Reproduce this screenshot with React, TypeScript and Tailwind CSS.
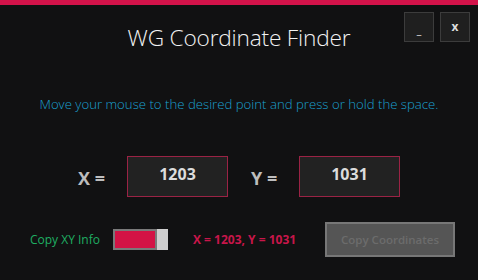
import React, { useState } from 'react';

export default function App() {
  const [copyXY, setCopyXY] = useState(true);
  const x = 1203;
  const y = 1031;

  return (
    <div className="w-[478px] h-[280px] bg-[#111112] flex flex-col overflow-hidden" style={{ fontFamily: '"Open Sans", "Noto Sans", sans-serif' }}>
      <div className="h-[5px] bg-[#d3134a]" />

      {/* header */}
      <div className="grid grid-cols-[1fr_auto_1fr] items-start">
        <div />
        <h1 className="mt-[17px] text-[22.7px] font-light text-[#f2f2f2] tracking-[-0.2px] leading-[32px]">WG Coordinate Finder</h1>
        <div className="flex justify-end gap-[6px] pt-[7px] pr-[8px]">
          <button className="w-[30px] h-[30px] bg-[#1f1f1f] border border-[#3c3c3c] text-[#ddd] text-[11px] font-bold leading-none flex items-center justify-center pt-[4px]">_</button>
          <button className="w-[30px] h-[30px] bg-[#1f1f1f] border border-[#3c3c3c] text-[#ddd] text-[12px] font-bold leading-none flex items-center justify-center">x</button>
        </div>
      </div>

      <p className="mt-[40px] text-center text-[13.2px] font-light text-[#1ba0cf] leading-[20px]">
        Move your mouse to the desired point and press or hold the space.
      </p>

      {/* coordinate boxes */}
      <div className="mt-[42px] flex items-center pl-[78px]">
        <span className="w-[49px] text-[18px] font-bold text-[#bdbdbd] mt-[4px]">X =</span>
        <div className="w-[101px] h-[41px] bg-[#222222] border border-[#9b2345] flex items-start justify-center pt-[5px] text-[16px] font-bold text-[#dcdcdc]">{x}</div>
        <span className="ml-[23px] w-[48px] text-[18px] font-bold text-[#bdbdbd] mt-[4px]">Y =</span>
        <div className="w-[101px] h-[41px] bg-[#222222] border border-[#9b2345] flex items-start justify-center pt-[5px] text-[16px] font-bold text-[#dcdcdc]">{y}</div>
      </div>

      {/* bottom row */}
      <div className="mt-[25px] flex items-center pl-[30px]">
        <span className="text-[12px] text-[#1fae62] w-[83px]">Copy XY Info</span>
        <button onClick={() => setCopyXY(!copyXY)} className="flex h-[21px] w-[55px]">
          <span className="flex-1 border-2 border-[#7a7a7a] bg-[#d31345]" />
          <span className="w-[11px] bg-[#cfcfcf]" />
        </button>
        <span className="ml-[25px] text-[12px] font-bold text-[#c8164a] w-[132px]">X = {x}, Y = {y}</span>
        <button className="w-[130px] h-[35px] bg-[#555555] border-2 border-[#777777] text-[11.5px] font-semibold text-[#6c6c6c]">Copy Coordinates</button>
      </div>
    </div>
  );
}
